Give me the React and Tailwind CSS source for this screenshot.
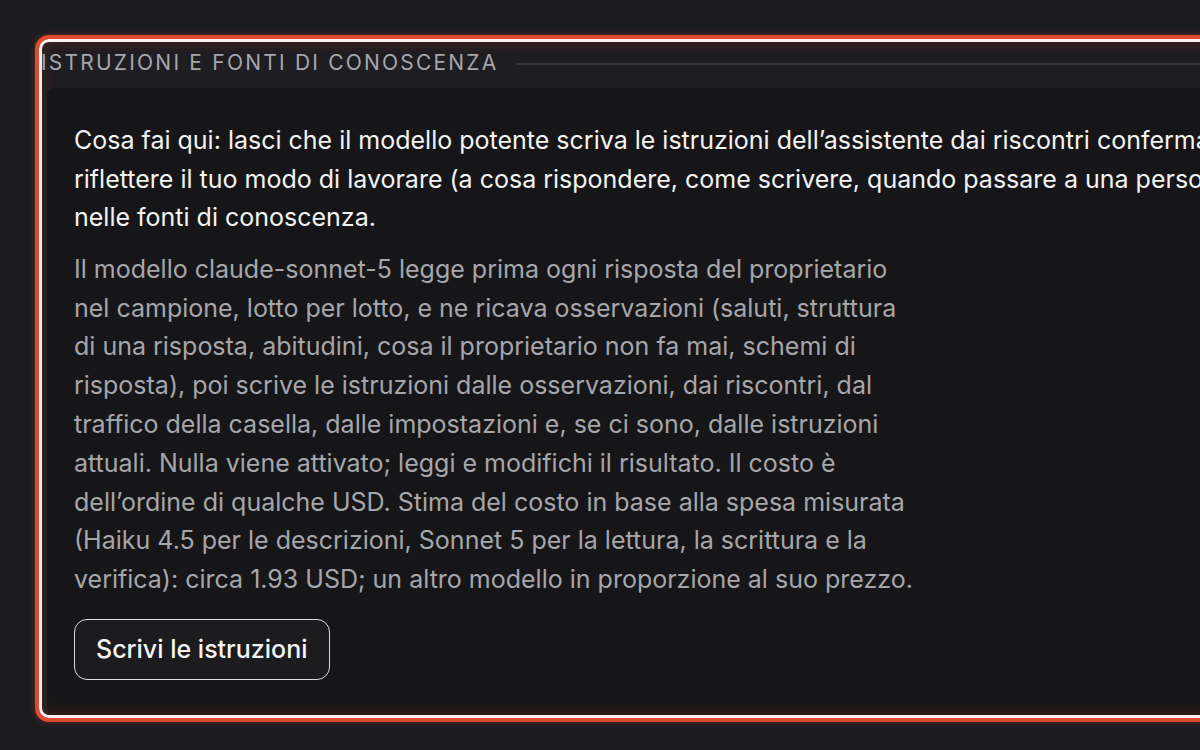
import React from 'react';

function InstructionsPanel() {
   return (
      <div className="w-[1420px] rounded-[14px] border-4 border-[#e04a2f] shadow-[0_0_6px_rgba(224,74,47,0.35)]">
         <div className="flex flex-col overflow-hidden rounded-[10px] border-[3px] border-[#fbf3f1] bg-[#1e1d21] shadow-[inset_0_0_14px_rgba(200,60,40,0.28)]">
            <div className="flex h-[46px] items-center">
               <h3 className="-ml-[1px] -mt-[6px] shrink-0 text-[21px] font-normal uppercase leading-none tracking-[0.105em] text-[#a6a6ad]">
                  Istruzioni e fonti di conoscenza
               </h3>
               <div className="ml-[18px] mt-[-2px] h-[2px] flex-1 bg-[#35353a]"></div>
            </div>
            <div className="ml-[5px] rounded-tl-[8px] bg-[#161618] px-[27px] pt-[33px] pb-[35px] shadow-[inset_0_-10px_14px_-8px_rgba(200,60,40,0.25)]">
               <p className="text-[25px] leading-[38.6px] text-[#f3f3f4] whitespace-nowrap">
                  Cosa fai qui: lasci che il modello potente scriva le istruzioni dell’assistente dai riscontri confermati, per
                  <br />
                  riflettere il tuo modo di lavorare (a cosa rispondere, come scrivere, quando passare a una persona) e
                  <br />
                  nelle fonti di conoscenza.
               </p>
               <p className="mt-[13px] max-w-[846px] text-[25px] leading-[38.8px] text-[#a6a6ab]">
                  Il modello claude-sonnet-5 legge prima ogni risposta del proprietario nel campione, lotto per lotto, e ne ricava osservazioni (saluti, struttura di una risposta, abitudini, cosa il proprietario non fa mai, schemi di risposta), poi scrive le istruzioni dalle osservazioni, dai riscontri, dal traffico della casella, dalle impostazioni e, se ci sono, dalle istruzioni attuali. Nulla viene attivato; leggi e modifichi il risultato. Il costo è dell’ordine di qualche USD. Stima del costo in base alla spesa misurata (Haiku 4.5 per le descrizioni, Sonnet 5 per la lettura, la scrittura e la verifica): circa 1.93 USD; un altro modello in proporzione al suo prezzo.
               </p>
               <button className="mt-[20px] flex h-[61px] items-center rounded-[13px] border-[1.5px] border-[#dcdcde] bg-[#1c1c1f] px-[21px] text-[25px] font-medium text-[#f4f4f5]">
                  Scrivi le istruzioni
               </button>
            </div>
         </div>
      </div>
   );
}

export default function App() {
   return (
      <div
         className="h-[750px] w-[1200px] overflow-hidden bg-[#1c1c20] pl-[35px] pt-[35px]"
         style={{ fontFamily: 'Inter, "Noto Sans", sans-serif' }}
      >
         <InstructionsPanel />
      </div>
   );
}
